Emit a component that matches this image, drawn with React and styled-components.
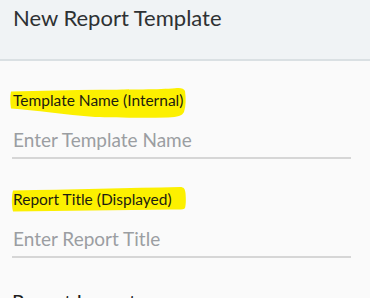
import styled, { createGlobalStyle } from "styled-components";

const GlobalStyle = createGlobalStyle`
    html, body {
        margin: 0;
        padding: 0;
        background: #fafafa;
    }
    body {
        font-family: Lato, "Open Sans", sans-serif;
    }
`;

const Page = styled.div`
    width: 370px;
    height: 298px;
    overflow: hidden;
    background: #fafafa;
`;

const Header = styled.header`
    height: 61px;
    box-sizing: border-box;
    padding: 5px 13px 0;
    background: #f0f3f5;
    border-bottom: 2px solid #dae0e3;
`;

const Title = styled.h1`
    margin: 0;
    font-size: 22px;
    line-height: 25px;
    font-weight: 400;
    color: #2e3133;
`;

const Body = styled.div`
    padding: 30px 19px 0 12px;
    display: flex;
    flex-direction: column;
`;

const Field = styled.div`
    display: flex;
    flex-direction: column;
    margin-bottom: ${(p) => p.$gap || 0}px;
`;

const Label = styled.label`
    position: relative;
    align-self: flex-start;
    margin-left: 1px;
    font-size: 15.5px;
    line-height: 19px;
    color: #1c1c10;
`;

const LabelText = styled.span`
    position: relative;
`;

const Marker = styled.svg`
    position: absolute;
    left: -3px;
    top: -3px;
    width: 176px;
    height: 32px;
    overflow: visible;
`;

const Input = styled.input`
    margin-top: 15px;
    height: 28px;
    padding: 0 0 4px 1px;
    box-sizing: content-box;
    border: 0;
    border-bottom: 2px solid #d6d6d6;
    background: transparent;
    font-family: inherit;
    font-size: 19px;
    color: #333;
    outline: none;

    &::placeholder {
        color: #9b9ea2;
    }
`;

const Section = styled.h2`
    margin: 0;
    font-size: 20px;
    line-height: 24px;
    font-weight: 400;
    color: #1e1e1e;
`;

const highlights = {
    wave: "M1 3.5 C30 2.5 60 2 90 1.7 C120 1.5 150 1.5 165 0.2 C170 -0.5 174 0 175 3 C176 10 176 18 174 24 C172 28 168 29 158 29.5 C130 30 100 29.5 85 29 C55 27 25 22 1 20.5 C0 14 0 8 1 3.5 Z",
    slant: "M3 3.5 C60 2.5 120 1 170 0 C174 0 175 2 175.5 6 C176 12 176 18 175 21 C174 23 170 22.5 160 22.5 C110 23 55 24 3 24.5 C1.5 18 1.5 9 3 3.5 Z",
};

const HighlightedLabel = ({ htmlFor, children, shape }) => (
    <Label htmlFor={htmlFor}>
        <Marker viewBox="0 0 176 32" aria-hidden="true">
            <path d={highlights[shape]} fill="#fcf000" />
        </Marker>
        <LabelText>{children}</LabelText>
    </Label>
);

export default function App() {
    return (
        <Page>
            <GlobalStyle />
            <Header>
                <Title>New Report Template</Title>
            </Header>
            <Body>
                <Field $gap={31}>
                    <HighlightedLabel htmlFor="tpl-name" shape="wave">
                        Template Name (Internal)
                    </HighlightedLabel>
                    <Input id="tpl-name" placeholder="Enter Template Name" />
                </Field>
                <Field $gap={31}>
                    <HighlightedLabel htmlFor="rpt-title" shape="slant">
                        Report Title (Displayed)
                    </HighlightedLabel>
                    <Input id="rpt-title" placeholder="Enter Report Title" />
                </Field>
                <Section>Report Layout</Section>
            </Body>
        </Page>
    );
}
